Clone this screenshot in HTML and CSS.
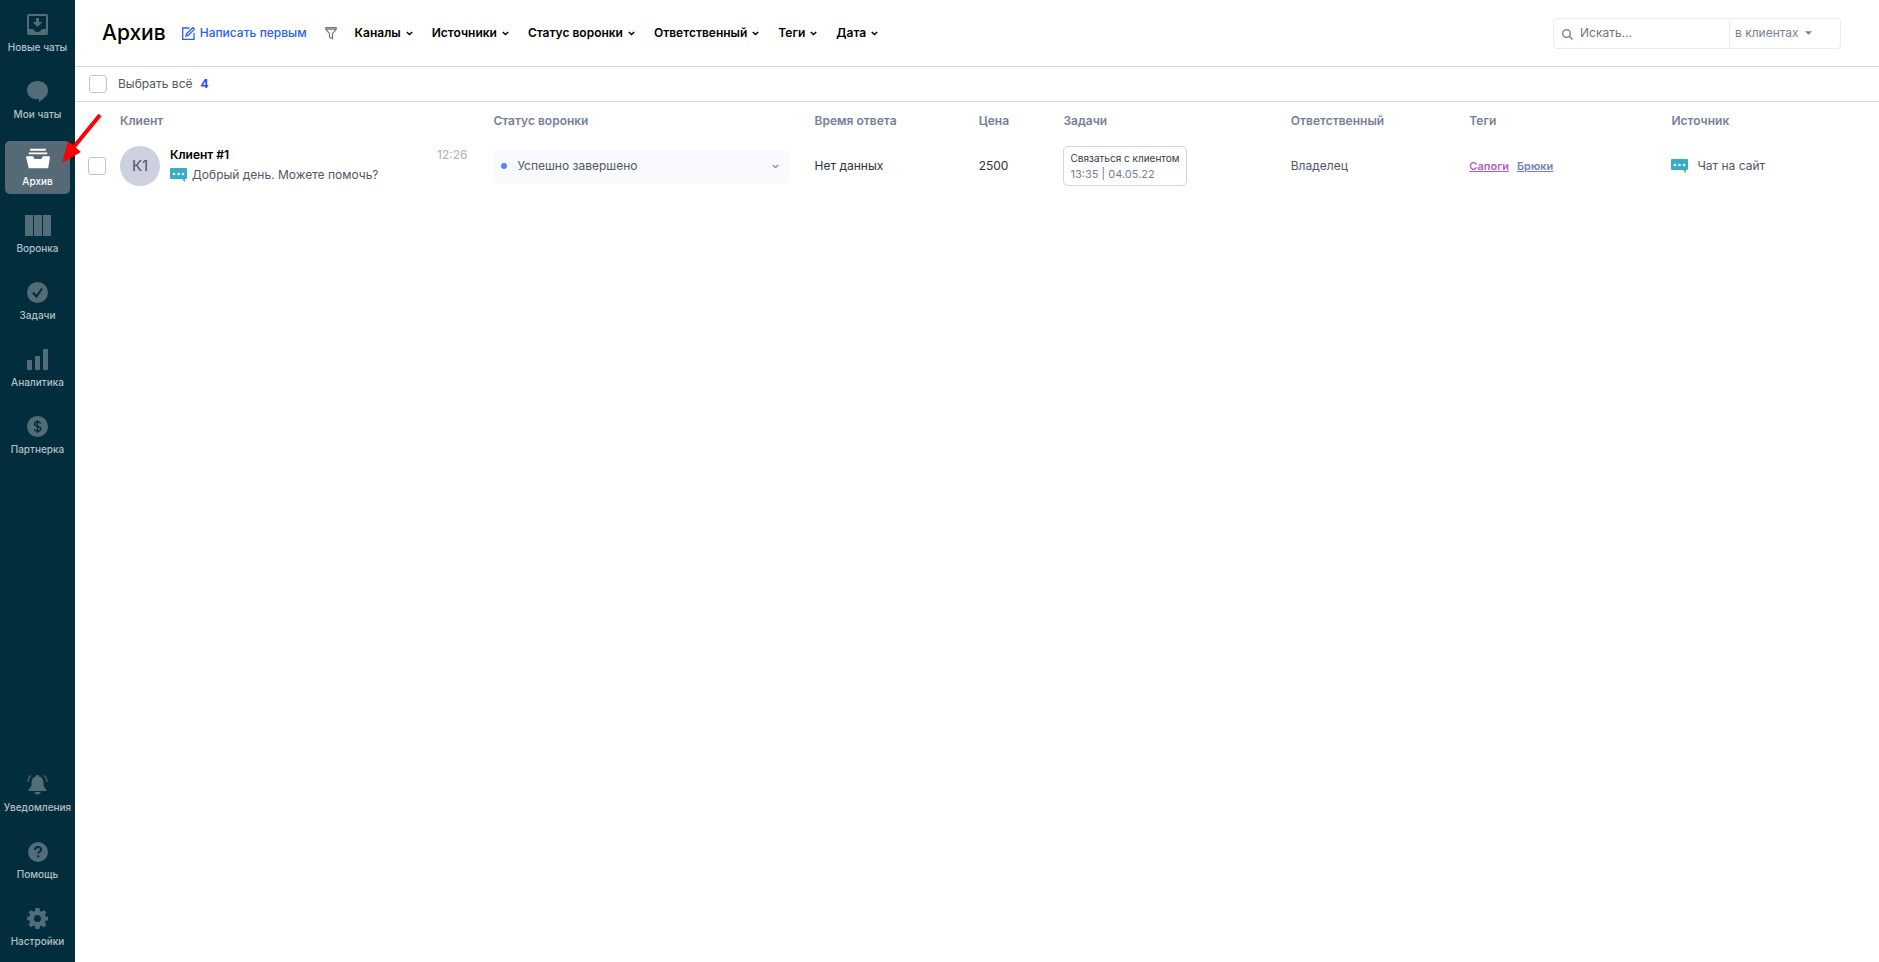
FILE: index.html
```html
<!DOCTYPE html>
<html lang="ru">
<head>
<meta charset="utf-8">
<title>Архив</title>
<link rel="stylesheet" href="styles.css">
</head>
<body>
<svg class="sprite" aria-hidden="true">
  <symbol id="chevron" viewBox="0 0 7 5"><path d="M.8.9 3.5 3.6 6.2.9" fill="none" stroke="currentColor" stroke-width="1.4"/></symbol>
  <symbol id="chat" viewBox="0 0 17 14"><path d="M1 0h15a1 1 0 0 1 1 1v9a1 1 0 0 1-1 1h-1v3l-3-3H1a1 1 0 0 1-1-1V1a1 1 0 0 1 1-1z" fill="#35adc7"/><g fill="#fff"><circle cx="4" cy="6" r="1.3"/><circle cx="8.5" cy="6" r="1.3"/><circle cx="13" cy="6" r="1.3"/></g></symbol>
</svg>
<div class="app">
  <nav class="sidebar">
    <a class="nav-item" href="#"><svg class="nav-icon" viewBox="0 0 21 21"><path fill-rule="evenodd" d="M2 0h17a2 2 0 0 1 2 2v17a2 2 0 0 1-2 2H2a2 2 0 0 1-2-2V2a2 2 0 0 1 2-2zM2 2v13h4c1 2 2.500 3 4.500 3s3.500-1 4.500-3h4V2zM9 4h3v4h3.500l-5 5-5-5H9z"/></svg>Новые чаты</a>
    <a class="nav-item" href="#"><svg class="nav-icon" viewBox="0 0 21 21"><path d="M10.500 0C16.500 0 21 4 21 9.200c0 5.500-4.500 8.300-9 11.800v-2.700C5 18.800 0 15 0 9.200 0 4 4.500 0 10.500 0z"/></svg>Мои чаты</a>
    <a class="nav-item nav-item-active" href="#"><svg class="nav-icon nav-icon-wide" viewBox="0 0 26 21"><path d="M4.500 0h17v2h-17zM3 4h20v2H3zM1 8h6.500c1 0 1 3 2 3h7c1 0 1-3 2-3H25q1 0 1 1l-2 12H3L0 9q0-1 1-1z"/></svg>Архив</a>
    <a class="nav-item" href="#"><svg class="nav-icon nav-icon-wide" viewBox="0 0 26 21"><path d="M0 0h8v21H0zM9 0h8v21H9zM18 0h8v21h-8z"/></svg>Воронка</a>
    <a class="nav-item" href="#"><svg class="nav-icon" viewBox="0 0 21 21"><circle cx="10.500" cy="10.500" r="10.500"/><path class="nav-cut" d="m6 10.500 3.500 4L15 6.500"/></svg>Задачи</a>
    <a class="nav-item" href="#"><svg class="nav-icon" viewBox="0 0 21 21"><rect y="11" width="5" height="10" rx="1"/><rect x="8" y="7" width="5" height="14" rx="1"/><rect x="16" width="5" height="21" rx="1"/></svg>Аналитика</a>
    <a class="nav-item" href="#"><svg class="nav-icon" viewBox="0 0 21 21"><circle cx="10.500" cy="10.500" r="10.500"/><path class="nav-cut nav-cut-thin" d="M10.500 4v13M13.600 7.500c-.4-1-1.500-1.700-3-1.700-1.800 0-3 .9-3 2.300 0 3.300 6.200 1.500 6.200 4.700 0 1.500-1.300 2.400-3.200 2.400-1.700 0-3-.8-3.300-2"/></svg>Партнерка</a>
    <a class="nav-item nav-item-bottom" href="#"><svg class="nav-icon" viewBox="0 0 21 21"><path d="M9.300 1h2.400v1.200c3 .6 4.800 3 4.800 6 0 5 1 6 3 7.300V17h-18v-1.500c2-1.300 3-2.300 3-7.300 0-3 1.800-5.400 4.800-6zM7.300 18h6.400c-.5 2-1.600 2.500-3.200 2.500S7.800 20 7.300 18z"/><path class="nav-line" d="M3.800 1.500C1.900 3.200 1 5.500.8 8M17.200 1.500c1.900 1.700 2.800 4 3 6.500"/></svg>Уведомления</a>
    <a class="nav-item" href="#"><svg class="nav-icon" viewBox="0 0 21 21"><circle cx="11" cy="11" r="10"/><path class="nav-cut" d="M8 9c0-4 6.200-3.600 6.200-.5 0 2-3 2-3 4.300M11.200 14.300v2.200"/></svg>Помощь</a>
    <a class="nav-item" href="#"><svg class="nav-icon" viewBox="0 0 21 21"><path fill-rule="evenodd" d="M8.500 0h4l.5 3 1.700.7L17 2l2.500 2.500-1.800 2.300.7 1.700 2.600.3v3.500l-2.600.4-.7 1.700 1.700 2.300-2.600 2.600-2.200-1.700-1.700.7-.4 2.700h-4l-.4-2.700-1.700-.7L4 19.200l-2.500-2.600 1.700-2.300-.7-1.700L0 12.300V8.800l2.500-.3.700-1.700L1.500 4.500 4 2l2.300 1.700L8 3zM10.500 7a3.500 3.500 0 1 0 0 7 3.500 3.500 0 0 0 0-7z"/></svg>Настройки</a>
  </nav>
  <main class="main">
    <header class="topbar">
      <h1 class="title">Архив</h1>
      <button class="write" type="button"><svg class="write-icon" viewBox="0 0 13 13"><path d="M7.500 1H.7v11.300H12V6M4 9l.6-2.300L11 .6l1.500 1.500-6.300 6.300z" fill="none" stroke="currentColor" stroke-width="1.300"/></svg>Написать первым</button>
      <button class="funnel" type="button" aria-label="Фильтр"><svg class="funnel-icon" viewBox="0 0 12 13"><path d="M.8.700h10.400v1.500L7.500 6.600v5.200l-3-1.600V6.600L.8 2.200zM.8 2.200h10.400" fill="none" stroke="currentColor" stroke-width="1.2"/></svg></button>
      <div class="filters">
        <button class="filter" type="button">Каналы<svg class="chevron"><use href="#chevron"/></svg></button>
        <button class="filter" type="button">Источники<svg class="chevron"><use href="#chevron"/></svg></button>
        <button class="filter" type="button">Статус воронки<svg class="chevron"><use href="#chevron"/></svg></button>
        <button class="filter" type="button">Ответственный<svg class="chevron"><use href="#chevron"/></svg></button>
        <button class="filter" type="button">Теги<svg class="chevron"><use href="#chevron"/></svg></button>
        <button class="filter" type="button">Дата<svg class="chevron"><use href="#chevron"/></svg></button>
      </div>
      <form class="search">
        <svg class="search-icon" viewBox="0 0 11 11"><circle cx="4.500" cy="4.500" r="3.800"/><path d="m7.300 7.300 3.200 3.200"/></svg>
        <input class="search-input" type="text" placeholder="Искать..." aria-label="Искать">
        <div class="scope">
          <select class="scope-select" aria-label="Область поиска"><option>в клиентах</option></select>
          <svg class="scope-caret" viewBox="0 0 8 4"><path d="M0 0h8L4 4z"/></svg>
        </div>
      </form>
    </header>
    <div class="selectbar">
      <input class="check" type="checkbox" id="all"><label class="all-label" for="all">Выбрать всё</label><b class="count">4</b>
    </div>
    <table class="clients">
      <colgroup><col class="c-check"><col class="c-client"><col class="c-status"><col class="c-time"><col class="c-price"><col class="c-tasks"><col class="c-owner"><col class="c-tags"><col></colgroup>
      <thead>
        <tr><th></th><th>Клиент</th><th>Статус воронки</th><th>Время ответа</th><th>Цена</th><th>Задачи</th><th>Ответственный</th><th>Теги</th><th>Источник</th></tr>
      </thead>
      <tbody>
        <tr>
          <td class="cell-check"><input class="check" type="checkbox" aria-label="Клиент #1"></td>
          <td>
            <div class="client">
              <span class="avatar">К1</span>
              <div class="client-info">
                <div class="client-top"><span class="client-name">Клиент #1</span><time class="client-time">12:26</time></div>
                <div class="message"><svg class="chat"><use href="#chat"/></svg>Добрый день. Можете помочь?</div>
              </div>
            </div>
          </td>
          <td><button class="status" type="button"><span class="dot"></span><span class="status-text">Успешно завершено</span><svg class="chevron"><use href="#chevron"/></svg></button></td>
          <td class="dark">Нет данных</td>
          <td class="dark">2500</td>
          <td><div class="task"><span class="task-name">Связаться с клиентом</span><span class="task-date">13:35 | 04.05.22</span></div></td>
          <td>Владелец</td>
          <td><div class="tags"><a class="tag tag-pink" href="#">Сапоги</a><a class="tag tag-blue" href="#">Брюки</a></div></td>
          <td><div class="source"><svg class="chat"><use href="#chat"/></svg>Чат на сайт</div></td>
        </tr>
      </tbody>
    </table>
  </main>
</div>
<svg class="pointer" viewBox="0 0 42 52" aria-hidden="true"><path d="M39 2 12 35" stroke="#f00" stroke-width="4"/><path d="M1 50 7 28 20 39z" fill="#f00"/></svg>
</body>
</html>
```

FILE: styles.css
```css
* { box-sizing: border-box; }
body {
  margin: 0;
  font: 12px/16px Inter, "Noto Sans", sans-serif;
  color: #505766;
  background: #fff;
}
button, input, select { font: inherit; color: inherit; }
button { padding: 0; border: 0; background: none; cursor: pointer; }
.sprite { position: absolute; width: 0; height: 0; }
.app { display: flex; min-height: 100vh; }

.sidebar {
  display: flex;
  flex-direction: column;
  gap: 14px;
  flex: 0 0 75px;
  min-width: 0;
  padding: 7px 5px 8px;
  background: #022d3d;
}
.nav-item {
  display: flex;
  flex-direction: column;
  align-items: center;
  gap: 5px;
  height: 53px;
  padding-top: 7px;
  border-radius: 5px;
  font-size: 10px;
  line-height: 14px;
  font-weight: 500;
  white-space: nowrap;
  color: #b3c0c5;
  text-decoration: none;
}
.nav-item-active { background: #566976; color: #fff; }
.nav-item-bottom { margin-top: auto; }
.nav-icon { width: 21px; height: 21px; flex: none; fill: #536d78; }
.nav-icon-wide { width: 26px; }
.nav-item-active .nav-icon { fill: #fff; width: 24px; }
.nav-cut { fill: none; stroke: #022d3d; stroke-width: 2; }
.nav-cut-thin { stroke-width: 1.4; }
.nav-line { fill: none; stroke: #536d78; stroke-width: 1.3; }

.main { flex: 1; min-width: 0; }
.topbar {
  display: flex;
  align-items: center;
  height: 67px;
  padding: 0 38px 0 27px;
  border-bottom: 1px solid #d6dae5;
}
.title { margin: 0 16px 0 0; font-size: 21px; line-height: 28px; font-weight: 500; color: #000; }
.write { display: flex; align-items: center; gap: 5px; font-weight: 500; color: #2a5cff; }
.write-icon { width: 13px; height: 13px; }
.funnel { display: flex; margin: 0 18px; color: #6f7890; }
.funnel-icon { width: 12px; height: 13px; }
.filters { display: flex; gap: 19px; }
.filter { display: flex; align-items: center; gap: 5px; font-weight: 600; color: #000; white-space: nowrap; }
.chevron { width: 7px; height: 5px; flex: none; }

.search {
  display: flex;
  align-items: center;
  width: 288px;
  height: 31px;
  margin-left: auto;
  border: 1px solid #e9ebef;
  border-radius: 4px;
}
.search-icon { width: 11px; height: 11px; margin: 2px 7px 0 8px; fill: none; stroke: #6f7890; stroke-width: 1.3; }
.search-input { flex: 1; min-width: 0; padding: 0; border: 0; outline: 0; background: none; }
.search-input::placeholder { color: #757575; opacity: 1; }
.scope { display: flex; align-items: center; align-self: stretch; width: 111px; padding-left: 5px; border-left: 1px solid #e9ebef; gap: 6px; color: #767f98; }
.scope-select { appearance: none; padding: 0; border: 0; background: none; outline: 0; }
.scope-caret { width: 7px; height: 4px; fill: #767f98; }

.selectbar {
  display: flex;
  align-items: center;
  height: 35px;
  padding-left: 14px;
  border-bottom: 1px solid #d6dae5;
}
.check {
  appearance: none;
  display: block;
  width: 18px;
  height: 18px;
  margin: 0;
  border: 1px solid #c0c4d2;
  border-radius: 3px;
  background: #fff;
}
.all-label { margin: 0 8px 0 11px; }
.count { color: #2a4cff; }

.clients { width: 100%; table-layout: fixed; border-collapse: collapse; }
.clients th { height: 38px; padding: 0; text-align: left; font-weight: 600; color: #767f98; }
.clients td { height: 52px; padding: 0; vertical-align: middle; }
.c-check { width: 45px; }
.c-client { width: 20.7%; }
.c-status { width: 17.8%; }
.c-time { width: 9.1%; }
.c-price { width: 4.7%; }
.c-tasks { width: 12.6%; }
.c-owner { width: 9.9%; }
.c-tags { width: 11.2%; }
.clients .cell-check { padding-left: 13px; }
.client { display: flex; align-items: center; gap: 10px; margin-right: 26px; }
.avatar {
  display: grid;
  place-items: center;
  flex: 0 0 40px;
  height: 40px;
  border-radius: 50%;
  background: #cdd1dd;
  color: #4a5468;
  font-size: 15px;
}
.client-info { flex: 1; display: grid; gap: 4px; padding-bottom: 2px; }
.client-top { display: flex; justify-content: space-between; }
.client-name { font-weight: 600; color: #000; }
.client-time { color: #a9afbd; }
.message { display: flex; align-items: center; gap: 5px; white-space: nowrap; }
.chat { width: 17px; height: 14px; flex: none; }
.status {
  display: flex;
  align-items: center;
  width: calc(100% - 26px);
  height: 33px;
  padding: 0 10px 0 8px;
  border-radius: 4px;
  background: #f9fafe;
  text-align: left;
}
.status .chevron { color: #8b93a7; }
.dot { width: 6px; height: 6px; margin-right: 10px; border-radius: 50%; background: #5581ff; }
.status-text { flex: 1; }
.dark { color: #2e323b; }
.task {
  display: inline-flex;
  flex-direction: column;
  padding: 3px 6px;
  border: 1px solid #d3d6e2;
  border-radius: 5px;
  white-space: nowrap;
}
.task-name { font-size: 10px; color: #353a45; }
.task-date { font-size: 11px; color: #767f98; }
.tags { display: flex; gap: 8px; }
.tag { font-size: 11px; font-weight: 600; }
.tag-pink { color: #b45ec5; }
.tag-blue { color: #7480cc; }
.source { display: flex; align-items: center; gap: 9px; }

.pointer { position: absolute; left: 61px; top: 113px; width: 42px; height: 52px; }
```
